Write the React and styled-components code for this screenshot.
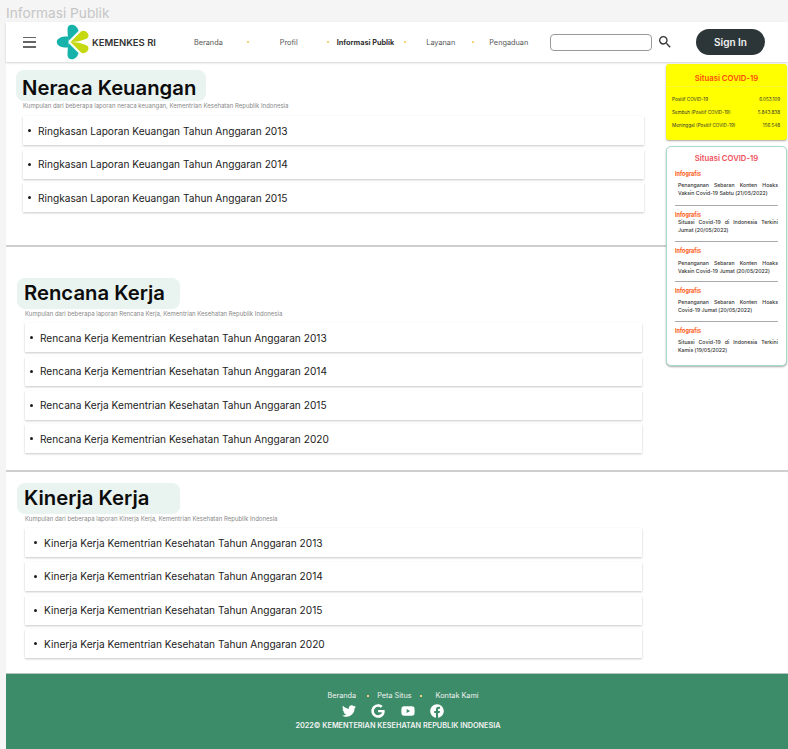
import styled, { createGlobalStyle } from "styled-components";
import { FaTwitter, FaGoogle, FaYoutube, FaFacebook } from "react-icons/fa";
import { MdSearch } from "react-icons/md";

const GlobalStyle = createGlobalStyle`
  html, body {
    margin: 0;
    padding: 0;
    background: #f5f5f5;
    font-family: Inter, "Liberation Sans", sans-serif;
  }
  * { box-sizing: border-box; }
`;

const FrameTitle = styled.div`
  height: 22px;
  padding: 4px 0 0 6px;
  font-size: 13.7px;
  line-height: 18px;
  color: #c6c6c6;
`;

const Frame = styled.div`
  margin-left: 6px;
  width: 782px;
  background: #fff;
`;

const Header = styled.header`
  height: 40px;
  display: flex;
  align-items: center;
  padding-left: 17px;
  box-shadow: 0 1px 2px rgba(0, 0, 0, 0.18);
  position: relative;
  z-index: 2;
  background: #fff;
`;

const Burger = styled.div`
  width: 13px;
  height: 11px;
  display: flex;
  flex-direction: column;
  justify-content: space-between;
  margin-right: 20px;
  & > span {
    display: block;
    height: 1.5px;
    background: #666;
  }
`;

const Brand = styled.div`
  display: flex;
  align-items: center;
  width: 138px;
  font-size: 9.5px;
  font-weight: 600;
  color: #333;
  white-space: nowrap;
`;

const Nav = styled.nav`
  display: flex;
  align-items: center;
  width: 356px;
  font-size: 7.3px;
  color: #555;
`;

const NavLink = styled.span`
  margin-left: ${(p) => p.$left}px;
  font-weight: ${(p) => (p.$active ? 700 : 400)};
  color: ${(p) => (p.$active ? "#333" : "inherit")};
  white-space: nowrap;
`;

const Dot = styled.i`
  width: 2px;
  height: 2px;
  margin-left: ${(p) => p.$left}px;
  background: #f7d27a;
`;

const SearchBox = styled.input`
  width: 102px;
  height: 17px;
  border: 1px solid #999;
  border-radius: 4px;
  background: #fff;
  padding: 0 4px;
  outline: none;
`;

const SearchIcon = styled(MdSearch)`
  margin-left: 5px;
  font-size: 16px;
  color: #333;
`;

const SignIn = styled.button`
  margin-left: 23px;
  width: 69px;
  height: 26px;
  border: none;
  border-radius: 13px;
  background: #2c3639;
  color: #f1f1f1;
  font: 600 10px Inter, sans-serif;
`;

const Columns = styled.div`
  display: flex;
  align-items: flex-start;
`;

const Main = styled.main`
  width: 660px;
  min-width: 660px;
`;

const Section = styled.section`
  padding: ${(p) => p.$top}px 0 ${(p) => p.$bottom}px ${(p) => p.$left}px;
  width: ${(p) => p.$width || 636}px;
`;

const TitlePill = styled.h2`
  width: ${(p) => p.$width}px;
  height: 31px;
  margin: 0 0 0 -${(p) => p.$pull}px;
  padding-left: ${(p) => p.$pull - 1}px;
  border-radius: 8px;
  background: #e9f3ef;
  color: #0c0c0c;
  font-size: 20.3px;
  font-weight: 600;
  line-height: ${(p) => p.$line}px;
  white-space: nowrap;
`;

const Subtitle = styled.p`
  margin: 0;
  height: ${(p) => p.$height}px;
  padding-top: 1px;
  font-size: 6px;
  line-height: 7px;
  color: #888;
  white-space: nowrap;
`;

const List = styled.ul`
  margin: 0;
  padding: 0;
  list-style: none;
  display: flex;
  flex-direction: column;
  gap: 4.67px;
`;

const Item = styled.li`
  height: 29px;
  display: flex;
  align-items: center;
  padding-left: ${(p) => p.$indent}px;
  background: #fff;
  box-shadow: 0 1px 2px rgba(0, 0, 0, 0.22);
  font-size: 10.15px;
  color: #1c1c1c;
  white-space: nowrap;
  &::before {
    content: "";
    width: 3px;
    height: 3px;
    margin-right: 7px;
    border-radius: 50%;
    background: #1c1c1c;
  }
`;

const Divider = styled.hr`
  margin: 0;
  height: 2px;
  border: none;
  background: #cfcfcf;
`;

const Aside = styled.aside`
  width: 121px;
  padding-top: 2px;
  display: flex;
  flex-direction: column;
  gap: 6px;
  position: relative;
  z-index: 1;
`;

const StatsCard = styled.div`
  height: 76px;
  border-radius: 3px;
  background: #ffff00;
  box-shadow: 0 1px 2px rgba(0, 0, 0, 0.35);
`;

const StatsTitle = styled.div`
  height: 23px;
  padding-top: 10px;
  text-align: center;
  color: #ff4b0a;
  font-size: 7.7px;
  font-weight: 600;
  line-height: 10px;
  border-bottom: 1px solid #f7f72a;
`;

const StatsRows = styled.div`
  padding: 9px 7px 0 6px;
  display: flex;
  flex-direction: column;
  gap: 6px;
`;

const StatsRow = styled.div`
  display: flex;
  justify-content: space-between;
  height: 7px;
  font-size: 4.6px;
  line-height: 7px;
  color: #333;
`;

const NewsCard = styled.div`
  height: 220px;
  padding: 6px 8px 0;
  border: 1px solid #a9dcc9;
  border-radius: 5px;
  background: #fff;
  box-shadow: 0 1px 2px rgba(0, 0, 0, 0.35);
`;

const NewsTitle = styled.div`
  text-align: center;
  color: #f0505a;
  font-size: 7.7px;
  font-weight: 600;
  line-height: 11px;
  margin-bottom: 6px;
`;

const NewsItem = styled.div`
  height: ${(p) => p.$height}px;
  border-bottom: ${(p) => (p.$last ? "none" : "1px solid #aaa")};
  margin-bottom: 5px;
`;

const NewsLabel = styled.div`
  color: #ff5a14;
  font-size: 5.5px;
  font-weight: 700;
  line-height: 8px;
`;

const NewsText = styled.p`
  margin: ${(p) => p.$gap}px 0 0 3px;
  font-size: 5.2px;
  font-weight: 500;
  line-height: 8.3px;
  color: #333;
  text-align: justify;
`;

const Footer = styled.footer`
  height: 76px;
  margin-top: 15px;
  padding-top: 17px;
  background: #3c8c69;
  border-top: 1px solid #b5c4bd;
  color: #f2f2f2;
  display: flex;
  flex-direction: column;
  align-items: center;
`;

const FooterLinks = styled.div`
  display: flex;
  align-items: center;
  padding-left: 12px;
  font-size: 7.3px;
  line-height: 9px;
`;

const Socials = styled.div`
  margin: 3px 8px 0 0;
  display: flex;
  align-items: center;
  gap: 15.5px;
  font-size: 14px;
  height: 15px;
  color: #fff;
`;

const Copyright = styled.div`
  margin: 3px 0 0 2px;
  font-size: 7.3px;
  font-weight: 600;
  line-height: 10px;
`;

const Logo = () => (
  <svg width="36" height="36" viewBox="0 0 36 36">
    <path d="M12.5 12.5 C6 12 0.8 14 0.8 18 C0.8 22 6 24 12.5 23.5 Z" fill="#17b3aa" />
    <path d="M11.5 5 C11.5 1.5 14.5 0 17.5 1 C20.5 2 22 4.5 22.5 7 L12.5 17 C11.8 13 11.5 9 11.5 5 Z" fill="#17b3aa" />
    <path d="M11.5 31 C11.5 34.5 14.5 36 17.5 35 C20.5 34 22 31.5 22.5 29 L12.5 19 C11.8 23 11.5 27 11.5 31 Z" fill="#17b3aa" />
    <path d="M14.5 18 L25 7.5 C27 6 30 7 31.5 9 C33 11 32.8 13 31 14.5 C26 17 20 18 14.5 18 Z" fill="#c6d80f" />
    <path d="M14.5 18 L25 28.5 C27 30 30 29 31.5 27 C33 25 32.8 23 31 21.5 C26 19 20 18 14.5 18 Z" fill="#c6d80f" />
  </svg>
);

const neraca = [2013, 2014, 2015];
const years = [2013, 2014, 2015, 2020];

const stats = [
  ["Positif COVID-19", "6.053.109"],
  ["Sembuh (Positif COVID-19)", "5.843.838"],
  ["Meninggal (Positif COVID-19)", "156.548"],
];

const news = [
  { text: "Penanganan Sebaran Konten Hoaks Vaksin Covid-19 Sabtu (21/05/2022)", gap: 3, height: 36 },
  { text: "Situasi Covid-19 di Indonesia Terkini Jumat (20/05/2022)", gap: -1, height: 31 },
  { text: "Penanganan Sebaran Konten Hoaks Vaksin Covid-19 Jumat (20/05/2022)", gap: 4, height: 35 },
  { text: "Penanganan Sebaran Konten Hoaks Covid-19 Jumat (20/05/2022)", gap: 3, height: 35 },
  { text: "Situasi Covid-19 di Indonesia Terkini Kamis (19/05/2022)", gap: 3, last: true, height: 30 },
];

export default function App() {
  return (
    <>
      <GlobalStyle />
      <FrameTitle>Informasi Publik</FrameTitle>
      <Frame>
        <Header>
          <Burger>
            <span />
            <span />
            <span />
          </Burger>
          <Brand>
            <Logo />
            KEMENKES RI
          </Brand>
          <Nav>
            <NavLink $left={0}>Beranda</NavLink>
            <Dot $left={24} />
            <NavLink $left={31}>Profil</NavLink>
            <Dot $left={29} />
            <NavLink $left={8} $active>
              Informasi Publik
            </NavLink>
            <Dot $left={10} />
            <NavLink $left={20}>Layanan</NavLink>
            <Dot $left={17} />
            <NavLink $left={15}>Pengaduan</NavLink>
          </Nav>
          <SearchBox aria-label="Cari" />
          <SearchIcon />
          <SignIn>Sign In</SignIn>
        </Header>
        <Columns>
          <Main>
            <Section $top={8} $bottom={33} $left={17} $width={638}>
              <TitlePill $width={190} $pull={7} $line={35}>Neraca Keuangan</TitlePill>
              <Subtitle $height={15}>Kumpulan dari beberapa laporan neraca keuangan, Kementrian Kesehatan Republik Indonesia</Subtitle>
              <List>
                {neraca.map((y) => (
                  <Item key={y} $indent={5}>Ringkasan Laporan Keuangan Tahun Anggaran {y}</Item>
                ))}
              </List>
            </Section>
            <Divider />
            <Section $top={31} $bottom={17} $left={19} $width={636}>
              <TitlePill $width={163} $pull={8} $line={30}>Rencana Kerja</TitlePill>
              <Subtitle $height={14}>Kumpulan dari beberapa laporan Rencana Kerja, Kementrian Kesehatan Republik Indonesia</Subtitle>
              <List>
                {years.map((y) => (
                  <Item key={y} $indent={5}>Rencana Kerja Kementrian Kesehatan Tahun Anggaran {y}</Item>
                ))}
              </List>
            </Section>
          </Main>
          <Aside>
            <StatsCard>
              <StatsTitle>Situasi COVID-19</StatsTitle>
              <StatsRows>
                {stats.map(([label, value]) => (
                  <StatsRow key={label}>
                    <span>{label}</span>
                    <span>{value}</span>
                  </StatsRow>
                ))}
              </StatsRows>
            </StatsCard>
            <NewsCard>
              <NewsTitle>Situasi COVID-19</NewsTitle>
              {news.map((n) => (
                <NewsItem key={n.text} $last={n.last} $height={n.height}>
                  <NewsLabel>Infografis</NewsLabel>
                  <NewsText $gap={n.gap}>{n.text}</NewsText>
                </NewsItem>
              ))}
            </NewsCard>
          </Aside>
        </Columns>
        <Divider />
        <Section $top={11} $bottom={0} $left={19} $width={636}>
          <TitlePill $width={163} $pull={8} $line={30}>Kinerja Kerja</TitlePill>
          <Subtitle $height={14}>Kumpulan dari beberapa laporan Kinerja Kerja, Kementrian Kesehatan Republik Indonesia</Subtitle>
          <List>
            {years.map((y) => (
              <Item key={y} $indent={9}>Kinerja Kerja Kementrian Kesehatan Tahun Anggaran {y}</Item>
            ))}
          </List>
        </Section>
        <Footer>
          <FooterLinks>
            <NavLink $left={0}>Beranda</NavLink>
            <Dot $left={11} />
            <NavLink $left={8}>Peta Situs</NavLink>
            <Dot $left={8} />
            <NavLink $left={14}>Kontak Kami</NavLink>
          </FooterLinks>
          <Socials>
            <FaTwitter />
            <FaGoogle />
            <FaYoutube />
            <FaFacebook />
          </Socials>
          <Copyright>2022© KEMENTERIAN KESEHATAN REPUBLIK INDONESIA</Copyright>
        </Footer>
      </Frame>
    </>
  );
}
